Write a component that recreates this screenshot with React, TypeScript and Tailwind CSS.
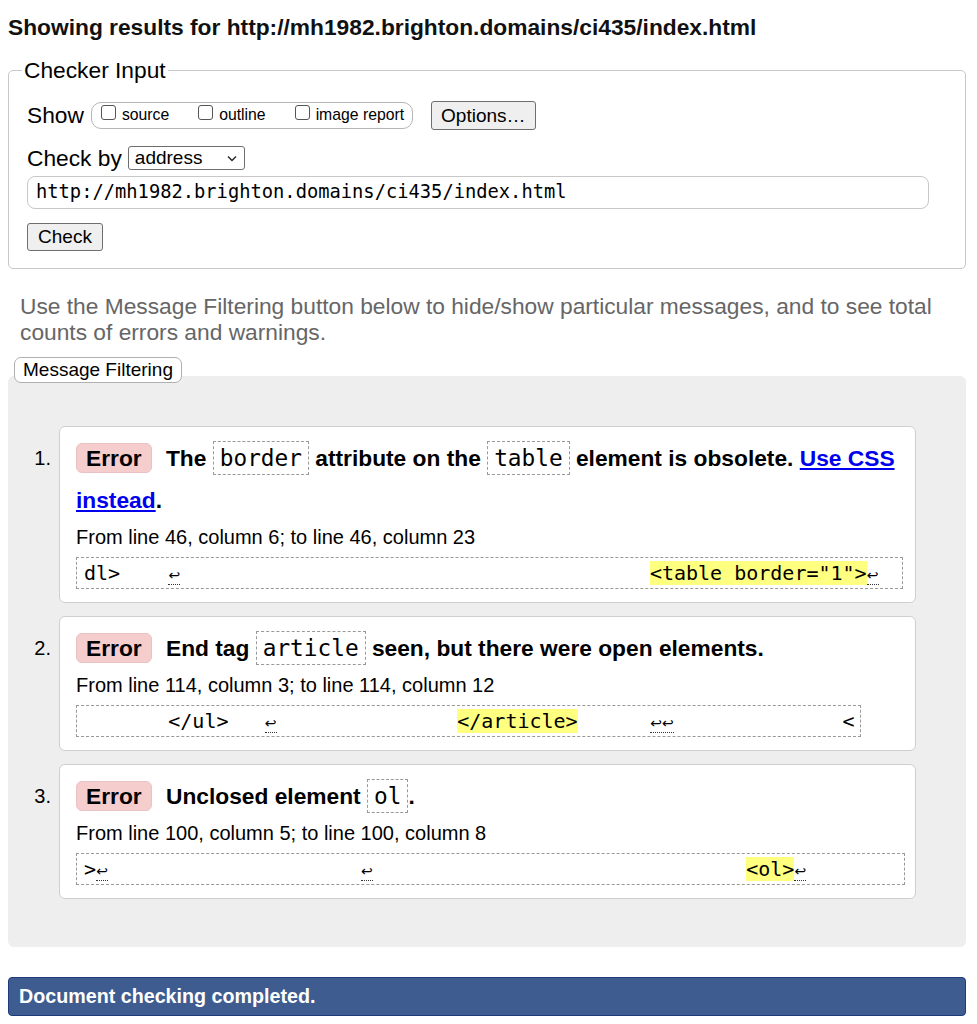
import React from "react";

const Ret = ({ n = 1 }: { n?: number }) => (
  <span
    className={
      "inline-block text-center font-['DejaVu_Sans',sans-serif] text-[14px] leading-[14px] pb-[2px] border-b border-dotted border-[#333] " +
      (n === 2 ? "w-[24px]" : "w-[12px]")
    }
  >
    {n === 2 ? "↩↩" : "↩"}
  </span>
);

const Hl = ({ children }: { children: React.ReactNode }) => (
  <span className="bg-[#ffff80]">{children}</span>
);

const Code = ({ children }: { children: React.ReactNode }) => (
  <code className="font-['DejaVu_Sans_Mono',monospace] font-normal text-[22.75px] px-[6px] py-[3px] border border-dashed border-[#999]">
    {children}
  </code>
);

const Badge = () => (
  <span className="inline-block px-[9px] leading-[28px] rounded-[6px] bg-[#f5cdcd] border border-[#e9c2c2] mr-[8px]">
    Error
  </span>
);

const Card = ({
  num,
  message,
  from,
  extract,
  extractW,
}: {
  num: string;
  message: React.ReactNode;
  from: string;
  extract: React.ReactNode;
  extractW: string;
}) => (
  <div className="flex">
    <div className="w-[43px] shrink-0 text-right text-[20px] leading-[42px] mt-[11px]">{num}</div>
    <div className="ml-[8px] w-[857px] bg-white border border-[#cfcfcf] rounded-[6px] pl-[16px] pr-[12px] pt-[10px] pb-[13px]">
      <p className="font-bold text-[22.75px] leading-[42px]">
        <Badge /> {message}
      </p>
      <p className="text-[20px] leading-[24px] mt-[4px]">{from}</p>
      <div
        className={
          "mt-[8px] h-[32px] border border-dashed border-[#999] px-[7px] font-['DejaVu_Sans_Mono',monospace] text-[20px] leading-[30px] whitespace-pre overflow-hidden " +
          extractW
        }
      >
        {extract}
      </div>
    </div>
  </div>
);

export default function App() {
  return (
    <div className="min-h-[1024px] bg-white text-black font-['Liberation_Sans',Arial,sans-serif]">
      <div className="ml-[8px] w-[958px] pb-[9px]">
        <h2 className="pt-[14px] text-[22.75px] leading-[27px] font-bold text-[#111]">
          Showing results for http://mh1982.brighton.domains/ci435/index.html
        </h2>

        <fieldset className="mt-[16px] border border-[#c8c8c8] rounded-[5px] pl-[13px] pr-[13px] pt-[17px] pb-[17px]">
          <legend className="px-[2px] text-[22.75px] leading-[26px]">Checker Input</legend>
          <div className="pl-[5px]">
            <div className="flex items-center h-[30px] text-[22.75px]">
              <span>Show</span>
              <div className="ml-[7px] flex items-center h-[27px] border border-[#b5b5b5] rounded-[10px] pl-[9px] pr-[8px] text-[15.75px]">
                <span className="w-[15px] h-[15px] border border-[#555] rounded-[3px] bg-white mb-[6px]"></span>
                <span className="ml-[6px]">source</span>
                <span className="ml-[29px] w-[15px] h-[15px] border border-[#555] rounded-[3px] bg-white mb-[6px]"></span>
                <span className="ml-[6px]">outline</span>
                <span className="ml-[29px] w-[15px] h-[15px] border border-[#555] rounded-[3px] bg-white mb-[6px]"></span>
                <span className="ml-[6px]">image report</span>
              </div>
              <button className="ml-[18px] h-[29px] px-[9px] border border-[#6e6e6e] rounded-[3px] bg-[#efefef] text-[19px] leading-[27px]">
                Options…
              </button>
            </div>

            <div className="mt-[16px] flex items-center h-[24px] text-[22.75px]">
              <span>Check by</span>
              <div className="ml-[6px] w-[117px] h-[24px] border border-[#6e6e6e] rounded-[3px] flex items-center justify-between pl-[6px] pr-[6px] text-[19px]">
                <span>address</span>
                <svg width="10" height="7" viewBox="0 0 10 7" className="mr-[1px]">
                  <polyline points="1,1.5 5,5.5 9,1.5" fill="none" stroke="#222" strokeWidth="1.3" />
                </svg>
              </div>
            </div>

            <div className="mt-[6px] w-[902px] h-[33px] border border-[#c8c8c8] rounded-[8px] px-[8px] flex items-center font-['DejaVu_Sans_Mono',monospace] text-[18.75px]">
              http://mh1982.brighton.domains/ci435/index.html
            </div>

            <button className="mt-[14px] block w-[76px] h-[28px] border border-[#6e6e6e] rounded-[3px] bg-[#efefef] text-[19px] leading-[26px]">
              Check
            </button>
          </div>
        </fieldset>

        <p className="mt-[24px] ml-[12px] text-[22.75px] leading-[26px] text-[#666]">
          Use the Message Filtering button below to hide/show particular messages, and to see total counts of errors and warnings.
        </p>

        <button className="relative z-10 mt-[12px] ml-[6px] h-[26px] px-[8px] bg-white border border-[#b0b0b0] rounded-[7px] text-[19px] leading-[24px]">
          Message Filtering
        </button>

        <div className="-mt-[7px] bg-[#eeeeee] rounded-[6px] pt-[50px] pb-[48px] flex flex-col gap-[13px]">
          <Card
            num="1."
            message={
              <>
                The <Code>border</Code> attribute on the <Code>table</Code> element is obsolete.{" "}
                <a href="#" className="text-[#0000ee] underline">
                  Use CSS instead
                </a>
                .
              </>
            }
            from="From line 46, column 6; to line 46, column 23"
            extractW="w-[827px]"
            extract={
              <>
                {"dl>    "}
                <Ret />
                {"                                       "}
                <Hl>{'<table border="1">'}</Hl>
                <Ret />
              </>
            }
          />
          <Card
            num="2."
            message={
              <>
                End tag <Code>article</Code> seen, but there were open elements.
              </>
            }
            from="From line 114, column 3; to line 114, column 12"
            extractW="w-[785px]"
            extract={
              <>
                {"       </ul>   "}
                <Ret />
                {"               "}
                <Hl>{"</article>"}</Hl>
                {"      "}
                <Ret n={2} />
                {"              <"}
              </>
            }
          />
          <Card
            num="3."
            message={
              <>
                Unclosed element <Code>ol</Code>.
              </>
            }
            from="From line 100, column 5; to line 100, column 8"
            extractW="w-[829px]"
            extract={
              <>
                {">"}
                <Ret />
                {"                     "}
                <Ret />
                {"                               "}
                <Hl>{"<ol>"}</Hl>
                <Ret />
              </>
            }
          />
        </div>

        <div className="mt-[30px] h-[39px] bg-[#3e5c8f] border border-[#1d3b7a] rounded-[4px] flex items-center pl-[10px] text-white font-bold text-[19.7px]">
          Document checking completed.
        </div>
      </div>
    </div>
  );
}
